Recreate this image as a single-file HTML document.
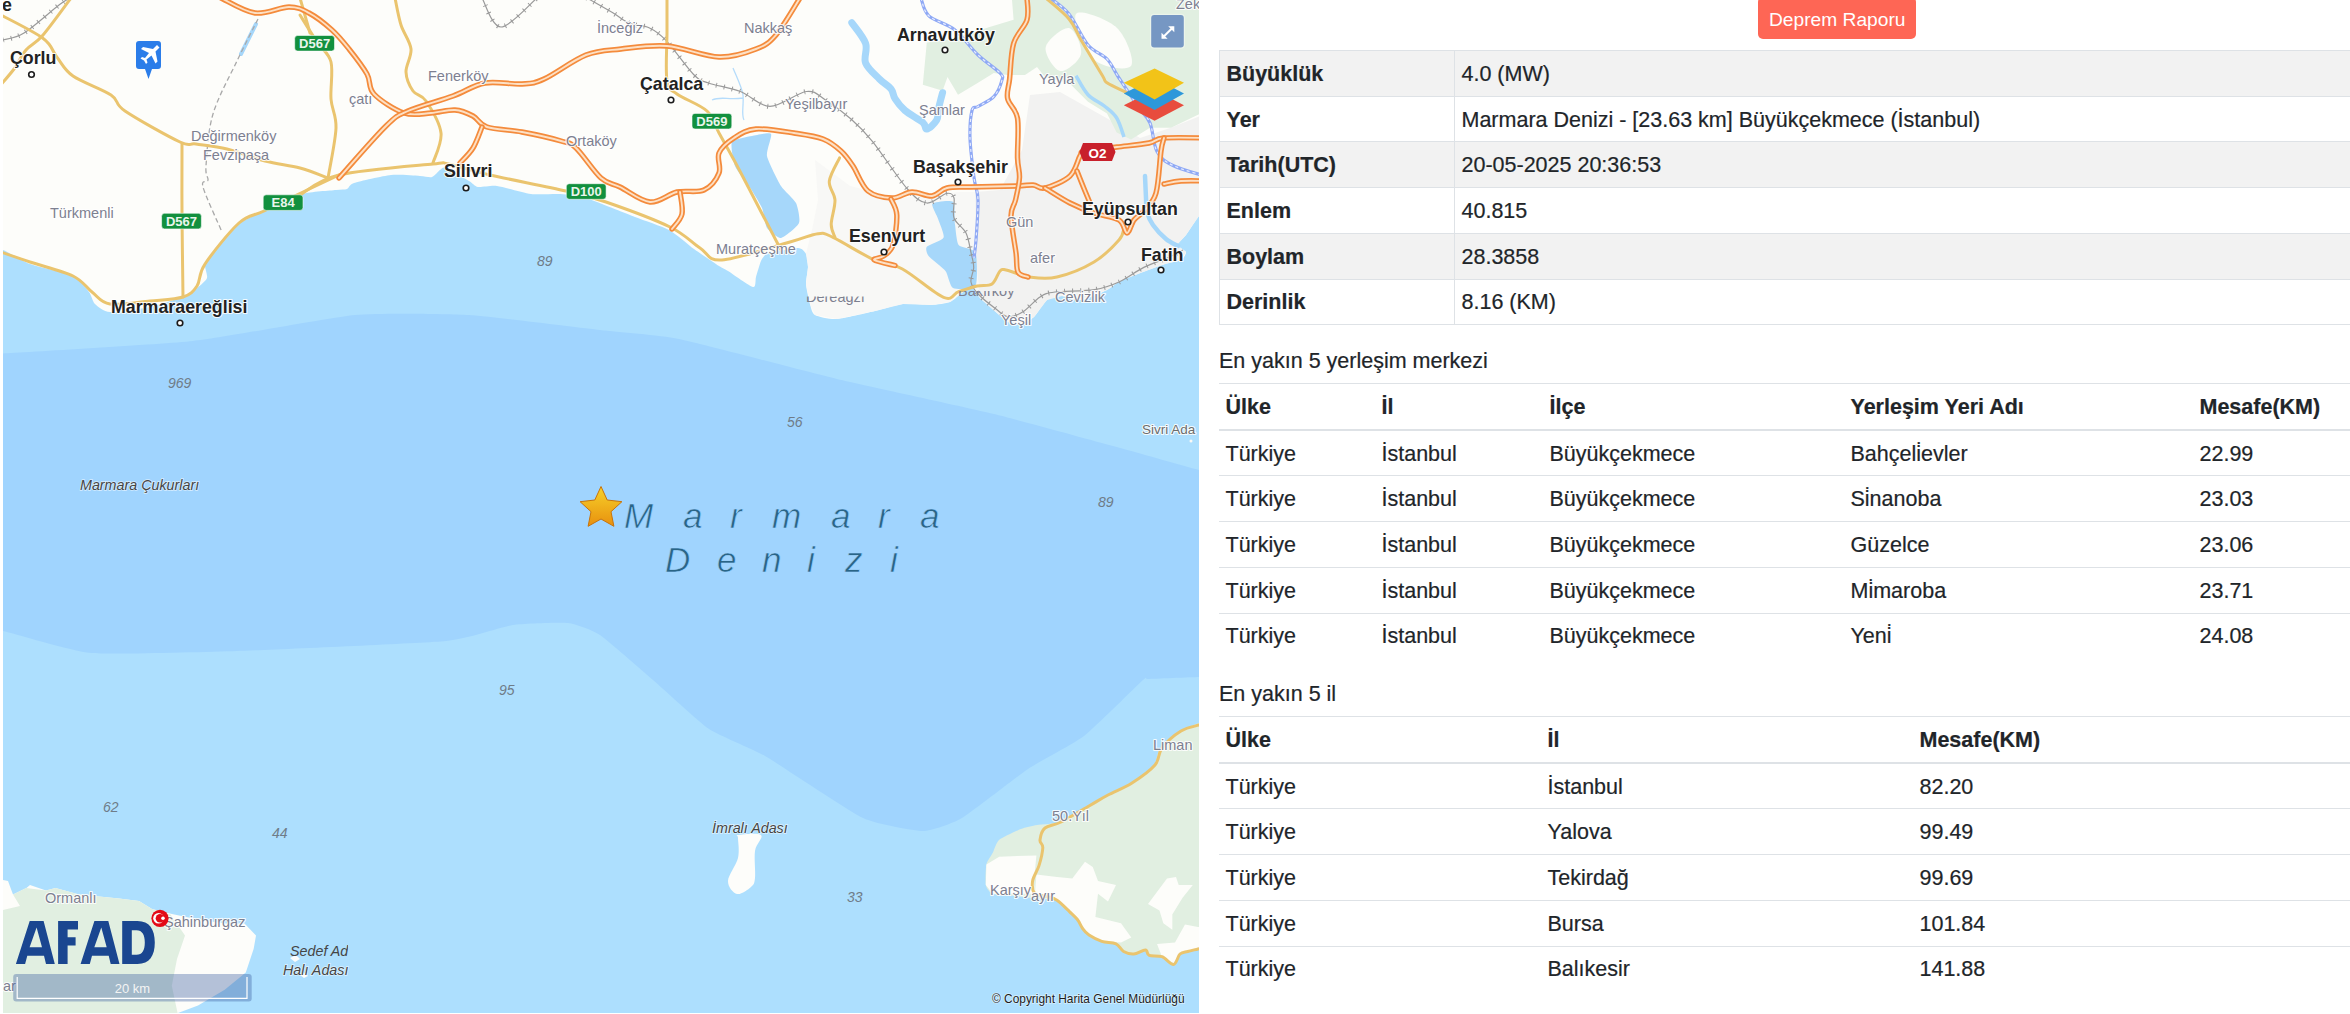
<!DOCTYPE html>
<html><head><meta charset="utf-8"><style>
html,body{margin:0;padding:0;background:#fff;width:2350px;height:1014px;overflow:hidden;position:relative;font-family:"Liberation Sans",sans-serif;color:#212529}
#map{position:absolute;left:0;top:0;width:1200px;height:1014px}
#map text{font-family:"Liberation Sans",sans-serif}
.btn{position:absolute;left:1758px;top:-3px;width:158px;height:41.7px;background:#fe6655;border-radius:5px;color:#fff;font-size:19.2px;line-height:1;box-sizing:border-box}
.btn span{position:absolute;left:11px;top:12.7px}
table{position:absolute;left:1219px;border-collapse:collapse;width:1200px;font-size:21.5px;table-layout:fixed;-webkit-text-stroke:0.2px #212529}
td,th{padding:7.8px 7.5px 6.2px 6.5px;line-height:30.75px;text-align:left;white-space:nowrap;vertical-align:top}
th{font-weight:bold}
.t1{top:50px;border:1px solid #dee2e6}
.t1 th,.t1 td{border:1px solid #dee2e6}
.t1 th{width:220px}
.t1 tr.odd{background:#f2f2f2}
.t2 tr,.t3 tr{border-top:1px solid #dee2e6}
.t2 tr.hd,.t3 tr.hd{border-bottom:2px solid #dee2e6}
.t2{top:383px}
.t3{top:716px}
.h{position:absolute;left:1219px;font-size:21.5px;white-space:nowrap;-webkit-text-stroke:0.2px #212529}
</style></head><body>
<svg id="map" width="1200" height="1014" viewBox="0 0 1200 1014">
<defs><clipPath id="mc"><rect x="3" y="0" width="1196" height="1013"/></clipPath></defs>
<g clip-path="url(#mc)">
<rect x="0" y="0" width="1210" height="1020" fill="#addffe"/>
<path d="M-20.0,354.0 C-18.1,331.0 -14.8,354.6 3.0,353.5 C20.8,352.4 163.7,344.2 193.0,341.0 C222.3,337.8 332.0,317.2 355.0,315.0 C378.0,312.8 448.6,313.8 469.0,315.0 C489.4,316.2 582.5,328.0 600.0,330.0 C617.5,332.0 659.2,334.9 679.0,339.0 C698.8,343.1 810.8,372.8 837.0,379.0 C863.2,385.2 971.0,408.4 994.0,414.0 C1017.0,419.6 1095.9,441.3 1113.0,446.0 C1130.1,450.7 1189.2,467.3 1199.0,470.0 C1208.8,472.7 1227.4,460.8 1230.0,478.0 C1232.6,495.2 1232.6,660.4 1230.0,677.0 C1227.4,693.6 1205.8,676.8 1199.0,677.0 C1192.2,677.2 1152.7,678.8 1148.0,679.0 C1143.3,679.2 1148.3,675.2 1143.0,680.0 C1137.7,684.8 1093.6,728.6 1084.0,736.0 C1074.4,743.4 1038.2,762.2 1028.0,769.0 C1017.8,775.8 970.8,812.8 962.0,818.0 C953.2,823.2 931.2,831.0 923.0,831.0 C914.8,831.0 876.2,824.2 863.0,818.0 C849.8,811.8 777.8,763.4 765.0,756.0 C752.2,748.6 718.3,735.3 709.0,729.0 C699.7,722.7 662.1,687.8 653.0,680.0 C643.9,672.2 607.1,639.8 600.0,635.0 C592.9,630.2 575.2,623.8 568.0,623.0 C560.8,622.2 523.2,623.5 513.0,625.0 C502.8,626.5 469.0,638.8 446.0,641.0 C423.0,643.2 266.6,650.0 237.0,651.0 C207.4,652.0 110.5,654.7 91.0,653.0 C71.5,651.3 12.2,632.9 3.0,631.0 C-6.2,629.1 -18.1,653.1 -20.0,630.0 C-21.9,606.9 -21.9,377.0 -20.0,354.0 Z" fill="#a0d4fe"/>
<path d="M-10.0,250.0 C-8.5,280.3 -1.7,248.4 3.0,250.0 C7.7,251.6 21.8,261.0 30.0,264.0 C38.2,267.0 66.1,272.7 73.0,276.0 C79.9,279.3 86.4,288.7 89.0,292.0 C91.6,295.3 92.5,301.7 95.0,304.0 C97.5,306.3 103.6,311.6 110.0,312.0 C116.4,312.4 141.2,308.9 150.0,307.0 C158.8,305.1 179.5,298.2 185.0,296.0 C190.5,293.8 194.4,290.1 197.0,288.0 C199.6,285.9 206.1,280.8 207.0,278.0 C207.9,275.2 204.3,266.9 205.0,264.0 C205.7,261.1 209.3,257.6 213.0,253.0 C216.7,248.4 231.1,229.9 237.0,225.0 C242.9,220.1 256.4,214.6 264.0,211.0 C271.6,207.4 293.6,196.4 302.0,194.0 C310.4,191.6 330.8,190.6 336.0,190.0 C341.2,189.4 344.9,189.8 347.0,189.0 C349.1,188.2 348.9,184.6 354.0,183.0 C359.1,181.4 383.3,175.8 391.0,175.0 C398.7,174.2 415.2,175.8 420.0,176.0 C424.8,176.2 429.7,177.7 432.0,177.0 C434.3,176.3 438.4,171.1 440.0,170.0 C441.6,168.9 442.6,166.7 446.0,168.0 C449.4,169.3 465.3,178.8 469.0,181.0 C472.7,183.2 474.7,186.4 478.0,187.0 C481.3,187.6 490.8,185.2 497.0,186.0 C503.2,186.8 523.9,193.1 531.0,194.0 C538.1,194.9 552.3,193.8 558.0,194.0 C563.7,194.2 575.5,195.1 580.0,196.0 C584.5,196.9 590.6,199.6 597.0,202.0 C603.4,204.4 626.6,213.7 635.0,217.0 C643.4,220.3 662.1,226.3 669.0,230.0 C675.9,233.7 688.2,244.8 694.0,249.0 C699.8,253.2 715.0,263.4 719.0,266.0 C723.0,268.6 724.0,268.6 728.0,271.0 C732.0,273.4 749.7,286.3 753.0,287.0 C756.3,287.7 755.1,280.0 756.0,277.0 C756.9,274.0 759.8,263.7 761.0,261.0 C762.2,258.3 765.0,254.9 766.0,254.0 C767.0,253.1 766.3,253.7 770.0,253.0 C773.7,252.3 793.8,247.9 798.0,248.0 C802.2,248.1 804.8,251.8 806.0,254.0 C807.2,256.2 808.0,263.5 808.0,267.0 C808.0,270.5 805.8,279.7 806.0,284.0 C806.2,288.3 809.0,300.4 810.0,304.0 C811.0,307.6 811.9,313.2 815.0,315.0 C818.1,316.8 830.0,319.5 837.0,319.0 C844.0,318.5 867.3,312.8 875.0,311.0 C882.7,309.2 896.5,304.7 903.0,304.0 C909.5,303.3 925.5,305.2 931.0,305.0 C936.5,304.8 946.3,303.5 950.0,302.0 C953.7,300.5 960.4,293.8 963.0,292.0 C965.6,290.2 970.0,286.3 972.0,287.0 C974.0,287.7 977.1,295.0 980.0,298.0 C982.9,301.0 993.7,310.2 997.0,313.0 C1000.3,315.8 1005.2,320.7 1008.0,322.0 C1010.8,323.3 1018.0,324.6 1021.0,324.0 C1024.0,323.4 1031.0,319.8 1034.0,317.0 C1037.0,314.2 1043.7,302.4 1047.0,300.0 C1050.3,297.6 1058.0,296.0 1062.0,296.0 C1066.0,296.0 1075.8,300.7 1081.0,300.0 C1086.2,299.3 1102.5,292.2 1107.0,290.0 C1111.5,287.8 1115.8,283.1 1120.0,281.0 C1124.2,278.9 1137.8,274.0 1143.0,272.0 C1148.2,270.0 1160.6,265.4 1165.0,264.0 C1169.4,262.6 1178.5,261.4 1181.0,260.0 C1183.5,258.6 1186.5,253.8 1186.0,252.0 C1185.5,250.2 1177.0,247.0 1177.0,245.0 C1177.0,243.0 1183.4,238.4 1186.0,235.0 C1188.6,231.6 1196.2,218.9 1199.0,216.0 C1201.8,213.1 1208.7,236.4 1210.0,210.0 C1211.3,183.6 1352.3,15.7 1210.0,-10.0 C1067.7,-35.7 132.3,-40.3 -10.0,-10.0 C-152.3,20.3 -11.5,219.7 -10.0,250.0 Z" fill="#fdfdfa"/>
<path d="M815.0,160.0 L850.0,186.0 L900.0,198.0 L960.0,192.0 L975.0,192.0 L976.0,260.0 L980.0,298.0 L972.0,287.0 L963.0,292.0 L950.0,302.0 L931.0,305.0 L903.0,304.0 L875.0,311.0 L837.0,319.0 L815.0,315.0 L810.0,304.0 L806.0,284.0 L808.0,267.0 L806.0,254.0 L812.0,230.0 L818.0,200.0 Z" fill="#f8f8f6"/>
<path d="M975.0,192.0 L1000.0,190.0 L1022.0,150.0 L1030.0,95.0 L1060.0,92.0 L1110.0,120.0 L1140.0,138.0 L1170.0,128.0 L1210.0,112.0 L1210.0,210.0 L1199.0,216.0 L1186.0,235.0 L1177.0,245.0 L1186.0,252.0 L1181.0,260.0 L1165.0,264.0 L1143.0,272.0 L1120.0,281.0 L1107.0,290.0 L1081.0,300.0 L1062.0,296.0 L1047.0,300.0 L1034.0,317.0 L1021.0,324.0 L1008.0,322.0 L997.0,313.0 L980.0,298.0 L976.0,260.0 Z" fill="#f2f2f1"/>
<path d="M926.8,42.4 L950.0,39.4 L988.0,27.6 L1013.6,19.7 L1011.6,-5.0 L1210.0,-5.0 L1210.0,108.9 L1171.0,127.8 L1150.0,127.8 L1131.0,139.6 L1116.7,132.5 L1107.0,113.6 L1088.0,101.8 L1069.0,82.8 L1045.7,78.0 L1037.0,67.0 L1025.0,75.0 L1007.6,75.0 L993.8,73.0 L978.0,82.8 L958.0,94.7 L947.5,76.9 L942.6,90.7 L922.8,84.8 Z" fill="#e1efe1"/>
<path d="M1045.7,47.0 C1047.2,39.8 1063.1,26.8 1069.0,28.0 C1074.9,29.2 1082.5,46.8 1081.0,54.0 C1079.5,61.2 1065.9,72.2 1060.0,71.0 C1054.1,69.8 1044.2,54.2 1045.7,47.0 Z" fill="#fdfdfa"/>
<path d="M1076.0,14.0 C1080.0,8.8 1107.8,19.3 1117.0,28.0 C1126.2,36.7 1135.0,60.8 1131.0,66.0 C1127.0,71.2 1102.2,67.7 1093.0,59.0 C1083.8,50.3 1072.0,19.2 1076.0,14.0 Z" fill="#fdfdfa"/>
<path d="M1210.0,723.0 C1208.9,700.4 1201.8,722.2 1199.0,723.0 C1196.2,723.8 1185.4,728.4 1181.5,731.0 C1177.6,733.6 1162.8,745.6 1160.0,749.0 C1157.2,752.4 1156.8,761.6 1154.0,765.0 C1151.2,768.4 1136.6,780.0 1132.0,783.0 C1127.4,786.0 1112.3,792.7 1108.0,795.0 C1103.7,797.3 1093.7,803.3 1089.0,806.0 C1084.3,808.7 1066.2,820.1 1061.0,822.0 C1055.8,823.9 1041.0,824.3 1037.0,825.0 C1033.0,825.7 1024.8,827.5 1021.0,829.0 C1017.2,830.5 1001.8,837.6 999.0,840.0 C996.2,842.4 994.1,850.4 992.8,852.8 C991.5,855.2 987.1,861.2 986.4,864.4 C985.7,867.6 985.2,882.0 985.8,884.9 C986.4,887.8 989.5,892.6 992.8,893.8 C996.1,894.9 1013.8,895.9 1018.5,896.4 C1023.2,896.9 1036.2,898.6 1040.0,899.0 C1043.8,899.4 1054.0,899.0 1057.0,900.3 C1060.0,901.6 1067.7,909.9 1069.7,911.8 C1071.7,913.7 1076.1,917.8 1077.4,919.5 C1078.7,921.2 1081.4,927.0 1082.6,928.5 C1083.8,930.0 1087.1,933.7 1089.0,935.0 C1090.9,936.3 1099.1,940.4 1101.8,941.3 C1104.5,942.2 1113.8,942.8 1116.0,943.8 C1118.2,944.8 1121.8,950.5 1123.6,951.5 C1125.4,952.5 1131.6,954.1 1133.8,954.0 C1136.0,953.9 1143.9,949.9 1145.4,950.0 C1146.9,950.1 1147.5,954.7 1149.2,955.4 C1150.9,956.1 1159.6,955.8 1162.0,956.7 C1164.4,957.6 1171.8,964.7 1173.6,964.4 C1175.4,964.1 1178.6,955.3 1180.0,954.0 C1181.4,952.7 1185.9,952.0 1187.7,951.5 C1189.5,951.0 1195.8,949.2 1198.0,949.0 C1200.2,948.8 1208.8,971.6 1210.0,949.0 C1211.2,926.4 1211.1,745.6 1210.0,723.0 Z" fill="#e1efe1"/>
<path d="M986.4,864.4 L999.2,856.7 L1036.4,855.4 L1033.8,882.3 L1035.0,893.8 L992.8,893.8 L985.8,884.9 Z" fill="#fdfdfa"/>
<path d="M1036.4,874.6 L1057.0,877.0 L1072.3,878.5 L1085.0,861.8 L1092.8,867.0 L1098.0,881.0 L1116.0,884.9 L1108.0,901.5 L1098.0,893.8 L1095.4,917.0 L1121.0,923.3 L1131.3,937.4 L1121.0,942.6 L1101.8,941.3 L1089.0,935.0 L1077.4,919.5 L1057.0,900.3 L1035.0,893.8 Z" fill="#fdfdfa"/>
<path d="M1148.0,904.0 L1167.0,878.5 L1176.0,877.0 L1178.7,885.0 L1192.8,885.0 L1182.6,897.7 L1172.3,914.4 L1172.3,929.7 L1163.3,923.3 L1159.5,910.5 Z" fill="#fdfdfa"/>
<path d="M1157.0,944.0 L1175.0,942.6 L1185.0,924.6 L1198.0,927.0 L1210.0,927.0 L1210.0,949.0 L1198.0,949.0 L1180.0,954.0 L1173.6,963.0 L1162.0,956.7 Z" fill="#fdfdfa"/>
<path d="M3.0,880.0 L8.0,881.0 L13.0,894.5 L26.4,888.0 L30.0,885.0 L46.0,890.6 L55.5,888.0 L79.0,894.5 L119.0,898.5 L139.0,901.0 L152.0,909.0 L172.0,914.0 L198.0,919.6 L224.7,923.6 L244.5,923.6 L256.0,935.5 L253.7,948.7 L245.8,972.5 L224.7,989.7 L198.0,1005.5 L178.0,1013.0 L-10.0,1013.0 L-10.0,880.0 Z" fill="#fdfdfa"/>
<path d="M3.0,910.0 L20.0,906.0 L13.0,894.5 L26.0,888.0 L46.0,890.6 L55.5,888.0 L79.0,894.5 L119.0,898.5 L139.0,901.0 L152.0,909.0 L170.5,914.4 L185.0,935.5 L177.0,959.0 L171.8,985.7 L178.0,1015.0 L-10.0,1015.0 L-10.0,910.0 Z" fill="#e1efe1"/>
<path d="M738.0,835.0 C741.8,834.5 758.2,832.3 761.0,835.0 C763.8,837.7 756.0,843.8 755.0,851.0 C754.0,858.2 755.7,872.0 755.0,878.0 C754.3,884.0 754.0,884.3 751.0,887.0 C748.0,889.7 740.8,895.0 737.0,894.0 C733.2,893.0 727.8,887.0 728.0,881.0 C728.2,875.0 736.3,865.2 738.0,858.0 C739.7,850.8 738.0,841.8 738.0,838.0 C738.0,834.2 734.2,835.5 738.0,835.0 Z" fill="#fdfdfa"/>
<path d="M290,958 l6,-3 l4,4 l-5,3z M300,975 l5,-2 l3,3 l-4,2z" fill="#fdfdfa"/>
<path d="M851.8,22.7 C854.1,26.1 863.3,36.7 865.6,43.4 C867.9,50.1 863.3,57.1 865.6,63.0 C867.9,68.9 875.2,74.7 879.4,79.0 C883.6,83.3 888.4,85.5 891.0,88.8 C893.6,92.1 892.7,95.0 895.0,98.6 C897.3,102.2 900.4,106.5 905.0,110.5 C909.6,114.5 919.2,119.2 922.8,122.3 C926.4,125.4 924.5,129.3 926.8,129.0 C929.1,128.7 934.6,123.7 936.6,120.3 C938.6,116.9 937.6,113.1 938.6,108.5 C939.6,103.9 941.9,95.3 942.6,92.7" fill="none" stroke="#a6d7fa" stroke-width="7" stroke-linecap="round" stroke-linejoin="round"/>
<path d="M1145.0,176.0 C1145.2,179.7 1145.7,192.0 1146.0,198.0 C1146.3,204.0 1145.8,207.5 1147.0,212.0 C1148.2,216.5 1149.8,220.5 1153.0,225.0 C1156.2,229.5 1161.8,235.5 1166.0,239.0 C1170.2,242.5 1176.0,244.8 1178.0,246.0" fill="none" stroke="#a6d7fa" stroke-width="4.5" stroke-linecap="round"/>
<path d="M732.0,142.0 C733.7,139.0 748.1,136.8 752.0,136.0 C755.9,135.2 769.5,132.0 771.0,134.0 C772.5,136.0 766.0,150.8 767.0,156.0 C768.0,161.2 778.1,181.3 781.0,186.0 C783.9,190.7 794.2,199.3 796.0,203.0 C797.8,206.7 800.5,219.5 799.0,223.0 C797.5,226.5 784.2,237.5 781.0,238.0 C777.8,238.5 768.9,231.0 767.0,228.0 C765.1,225.0 763.8,212.2 762.0,208.0 C760.2,203.8 751.7,190.2 749.0,186.0 C746.3,181.8 736.7,170.4 735.0,166.0 C733.3,161.6 730.3,145.0 732.0,142.0 Z" fill="#a6d7fa"/>
<path d="M932.4,203.7 C933.9,202.0 950.7,199.7 953.0,201.8 C955.3,203.9 954.4,220.0 955.0,224.3 C955.6,228.6 956.6,242.2 958.6,245.0 C960.6,247.8 973.8,248.3 975.5,252.4 C977.2,256.5 977.8,282.4 975.5,286.0 C973.2,289.6 956.0,289.5 953.0,288.0 C950.0,286.5 947.9,274.2 945.5,271.0 C943.1,267.8 930.5,258.4 928.6,256.0 C926.7,253.6 925.3,248.7 926.8,246.8 C928.3,244.9 942.5,240.2 943.6,237.4 C944.7,234.6 939.1,222.1 938.0,218.7 C936.9,215.3 930.9,205.4 932.4,203.7 Z" fill="#a6d7fa"/>
<path d="M1076.0,75.7 C1078.0,78.9 1083.2,89.6 1088.0,94.7 C1092.8,99.8 1100.2,102.6 1105.0,106.5 C1109.8,110.4 1113.5,112.9 1116.7,118.0 C1119.9,123.1 1122.8,133.8 1124.0,137.0" fill="none" stroke="#a6d7fa" stroke-width="3.5"/>
<path d="M733,68 C738,80 742,88 743,95 C744,105 741,115 744,120 M712,100 C720,96 728,100 743,98" fill="none" stroke="#b5dcfb" stroke-width="1.3"/>
<path d="M241,54 L256,24" stroke="#a6d7fa" stroke-width="4" stroke-linecap="round"/>
<path d="M258.0,19.0 C254.5,26.0 244.5,45.2 237.0,61.0 C229.5,76.8 218.2,96.5 213.0,114.0 C207.8,131.5 206.8,155.0 206.0,166.0 C205.2,177.0 208.5,176.5 208.0,180.0 C207.5,183.5 200.7,178.3 203.0,187.0 C205.3,195.7 218.8,224.5 222.0,232.0" fill="none" stroke="#a9a9a9" stroke-width="1.3" stroke-dasharray="5,3"/>
<path d="M482.0,-2.0 C485.2,2.8 491.8,27.0 501.0,27.0 C510.2,27.0 531.0,2.8 537.0,-2.0" fill="none" stroke="#9a9a9a" stroke-width="1.2"/><path d="M482.0,-2.0 C485.2,2.8 491.8,27.0 501.0,27.0 C510.2,27.0 531.0,2.8 537.0,-2.0" fill="none" stroke="#9a9a9a" stroke-width="5" stroke-dasharray="1,7"/>
<path d="M587.0,-2.0 C591.3,0.5 605.7,8.6 612.8,12.8 C619.9,17.0 623.8,20.9 629.8,23.4 C635.8,25.9 643.0,24.9 649.0,27.7 C655.0,30.5 658.6,32.6 666.0,40.4 C673.4,48.2 686.5,67.4 693.6,74.5 C700.7,81.6 700.7,80.2 708.5,83.0 C716.3,85.8 730.1,87.6 740.4,91.5 C750.6,95.4 759.0,106.4 770.0,106.4 C781.0,106.4 797.1,92.6 806.4,91.5 C815.6,90.4 818.1,95.4 825.5,100.0 C832.9,104.6 843.1,112.1 851.0,119.0 C858.9,125.9 863.3,130.0 872.6,141.6 C881.9,153.2 898.0,178.3 907.0,188.5 C916.0,198.7 920.2,202.2 926.8,203.0 C933.4,203.8 942.1,194.2 946.6,193.4 C951.1,192.6 952.8,193.9 954.0,198.0 C955.2,202.1 952.0,212.2 954.0,218.0 C956.0,223.8 963.2,227.2 966.0,233.0 C968.8,238.8 969.7,246.9 971.0,252.6 C972.3,258.3 973.7,262.5 973.7,267.4 C973.7,272.3 970.2,277.5 971.0,282.0 C971.8,286.5 974.4,290.0 978.6,294.5 C982.8,299.0 991.1,305.3 996.0,309.0 C1000.9,312.7 1003.5,316.2 1008.0,316.7 C1012.5,317.2 1017.7,315.1 1023.0,311.8 C1028.3,308.5 1034.7,300.3 1040.0,297.0 C1045.3,293.7 1045.9,293.2 1055.0,292.0 C1064.1,290.8 1083.8,291.3 1094.5,289.6 C1105.2,287.9 1110.8,285.7 1119.0,282.0 C1127.2,278.3 1135.6,271.5 1143.8,267.4 C1152.0,263.3 1161.9,260.4 1168.4,257.5 C1174.9,254.6 1180.6,251.2 1183.0,250.0" fill="none" stroke="#9a9a9a" stroke-width="1.2"/><path d="M587.0,-2.0 C591.3,0.5 605.7,8.6 612.8,12.8 C619.9,17.0 623.8,20.9 629.8,23.4 C635.8,25.9 643.0,24.9 649.0,27.7 C655.0,30.5 658.6,32.6 666.0,40.4 C673.4,48.2 686.5,67.4 693.6,74.5 C700.7,81.6 700.7,80.2 708.5,83.0 C716.3,85.8 730.1,87.6 740.4,91.5 C750.6,95.4 759.0,106.4 770.0,106.4 C781.0,106.4 797.1,92.6 806.4,91.5 C815.6,90.4 818.1,95.4 825.5,100.0 C832.9,104.6 843.1,112.1 851.0,119.0 C858.9,125.9 863.3,130.0 872.6,141.6 C881.9,153.2 898.0,178.3 907.0,188.5 C916.0,198.7 920.2,202.2 926.8,203.0 C933.4,203.8 942.1,194.2 946.6,193.4 C951.1,192.6 952.8,193.9 954.0,198.0 C955.2,202.1 952.0,212.2 954.0,218.0 C956.0,223.8 963.2,227.2 966.0,233.0 C968.8,238.8 969.7,246.9 971.0,252.6 C972.3,258.3 973.7,262.5 973.7,267.4 C973.7,272.3 970.2,277.5 971.0,282.0 C971.8,286.5 974.4,290.0 978.6,294.5 C982.8,299.0 991.1,305.3 996.0,309.0 C1000.9,312.7 1003.5,316.2 1008.0,316.7 C1012.5,317.2 1017.7,315.1 1023.0,311.8 C1028.3,308.5 1034.7,300.3 1040.0,297.0 C1045.3,293.7 1045.9,293.2 1055.0,292.0 C1064.1,290.8 1083.8,291.3 1094.5,289.6 C1105.2,287.9 1110.8,285.7 1119.0,282.0 C1127.2,278.3 1135.6,271.5 1143.8,267.4 C1152.0,263.3 1161.9,260.4 1168.4,257.5 C1174.9,254.6 1180.6,251.2 1183.0,250.0" fill="none" stroke="#9a9a9a" stroke-width="5" stroke-dasharray="1,7"/>
<path d="M3.0,40.0 C6.5,38.8 14.7,38.8 24.0,33.0 C33.3,27.2 51.3,10.8 59.0,5.0 C66.7,-0.8 68.2,-0.8 70.0,-2.0" fill="none" stroke="#9a9a9a" stroke-width="1.2"/><path d="M3.0,40.0 C6.5,38.8 14.7,38.8 24.0,33.0 C33.3,27.2 51.3,10.8 59.0,5.0 C66.7,-0.8 68.2,-0.8 70.0,-2.0" fill="none" stroke="#9a9a9a" stroke-width="5" stroke-dasharray="1,7"/>
<path d="M920.9,-2.0 C922.2,1.0 923.2,10.5 928.8,15.8 C934.4,21.1 946.2,23.1 954.4,29.6 C962.6,36.1 970.4,47.8 978.0,55.0 C985.6,62.2 996.0,68.7 1000.0,73.0 C1004.0,77.3 1002.7,77.0 1001.7,80.9 C1000.7,84.8 997.8,92.3 993.8,96.6 C989.8,100.9 981.6,104.2 978.0,106.5 C974.4,108.8 973.3,105.2 972.0,110.5 C970.7,115.8 969.7,126.8 970.0,138.0 C970.3,149.2 972.7,167.2 974.0,177.5 C975.3,187.8 977.7,189.6 978.0,200.0 C978.3,210.4 976.7,230.3 976.0,240.0 C975.3,249.7 974.3,255.0 974.0,258.0" fill="none" stroke="#8fa9f5" stroke-width="3.2"/><path d="M920.9,-2.0 C922.2,1.0 923.2,10.5 928.8,15.8 C934.4,21.1 946.2,23.1 954.4,29.6 C962.6,36.1 970.4,47.8 978.0,55.0 C985.6,62.2 996.0,68.7 1000.0,73.0 C1004.0,77.3 1002.7,77.0 1001.7,80.9 C1000.7,84.8 997.8,92.3 993.8,96.6 C989.8,100.9 981.6,104.2 978.0,106.5 C974.4,108.8 973.3,105.2 972.0,110.5 C970.7,115.8 969.7,126.8 970.0,138.0 C970.3,149.2 972.7,167.2 974.0,177.5 C975.3,187.8 977.7,189.6 978.0,200.0 C978.3,210.4 976.7,230.3 976.0,240.0 C975.3,249.7 974.3,255.0 974.0,258.0" fill="none" stroke="#e6ecff" stroke-width="1.2" stroke-dasharray="3,3"/>
<path d="M1050.0,-2.0 C1053.2,0.7 1062.7,6.2 1069.0,14.0 C1075.3,21.8 1081.7,37.5 1088.0,45.0 C1094.3,52.5 1101.8,53.5 1107.0,59.0 C1112.2,64.5 1113.8,70.1 1119.0,78.0 C1124.2,85.9 1132.8,99.0 1138.0,106.5 C1143.2,114.0 1146.8,115.5 1150.0,123.0 C1153.2,130.5 1153.1,144.4 1157.0,151.5 C1160.9,158.6 1164.7,161.4 1173.5,165.7 C1182.3,170.0 1203.9,175.5 1210.0,177.5" fill="none" stroke="#8fa9f5" stroke-width="3.2"/><path d="M1050.0,-2.0 C1053.2,0.7 1062.7,6.2 1069.0,14.0 C1075.3,21.8 1081.7,37.5 1088.0,45.0 C1094.3,52.5 1101.8,53.5 1107.0,59.0 C1112.2,64.5 1113.8,70.1 1119.0,78.0 C1124.2,85.9 1132.8,99.0 1138.0,106.5 C1143.2,114.0 1146.8,115.5 1150.0,123.0 C1153.2,130.5 1153.1,144.4 1157.0,151.5 C1160.9,158.6 1164.7,161.4 1173.5,165.7 C1182.3,170.0 1203.9,175.5 1210.0,177.5" fill="none" stroke="#e6ecff" stroke-width="1.2" stroke-dasharray="3,3"/>
<path d="M300.0,195.0 C306.5,191.7 316.8,180.2 339.0,175.0 C361.2,169.8 414.8,165.8 433.0,164.0 C451.2,162.2 438.5,162.2 448.0,164.0 C457.5,165.8 470.3,170.5 490.0,175.0 C509.7,179.5 546.7,186.5 566.0,191.0 C585.3,195.5 588.7,196.0 606.0,202.0 C623.3,208.0 654.3,219.3 670.0,227.0 C685.7,234.7 691.3,242.5 700.0,248.0 C708.7,253.5 707.0,261.0 722.0,260.0 C737.0,259.0 774.0,246.4 790.0,242.0 C806.0,237.6 810.8,234.5 818.0,233.7 C825.2,232.9 823.6,233.0 833.0,237.4 C842.4,241.8 862.7,254.7 874.3,260.0 C885.9,265.3 890.8,262.8 902.4,269.0 C914.0,275.2 934.2,293.6 943.6,297.4 C953.0,301.2 953.0,293.6 958.6,291.7 C964.2,289.8 971.4,287.3 977.0,286.0 C982.6,284.7 988.2,286.5 992.0,284.0 C995.8,281.5 997.7,273.3 1000.0,271.0 C1002.3,268.7 1001.0,269.0 1006.0,270.0 C1011.0,271.0 1021.5,275.8 1030.0,277.0 C1038.5,278.2 1046.3,279.5 1057.0,277.0 C1067.7,274.5 1083.7,268.2 1094.0,262.0 C1104.3,255.8 1114.0,245.7 1119.0,240.0 C1124.0,234.3 1123.2,230.0 1124.0,228.0" fill="none" stroke="#eac46e" stroke-width="3" stroke-linecap="round" stroke-linejoin="round"/>
<path d="M395.0,-2.0 C396.0,2.5 398.3,16.5 401.0,25.0 C403.7,33.5 410.2,41.2 411.0,49.0 C411.8,56.8 405.7,65.0 406.0,72.0 C406.3,79.0 409.7,86.2 413.0,91.0 C416.3,95.8 421.3,94.0 426.0,101.0 C430.7,108.0 439.8,122.7 441.0,133.0 C442.2,143.3 434.3,158.0 433.0,163.0" fill="none" stroke="#eac46e" stroke-width="3" stroke-linecap="round" stroke-linejoin="round"/>
<path d="M300.0,15.0 C302.8,19.5 311.8,34.2 317.0,42.0 C322.2,49.8 328.7,52.5 331.0,62.0 C333.3,71.5 330.2,88.0 331.0,99.0 C331.8,110.0 336.5,114.8 336.0,128.0 C335.5,141.2 329.3,169.7 328.0,178.0" fill="none" stroke="#eac46e" stroke-width="3" stroke-linecap="round" stroke-linejoin="round"/>
<path d="M667.0,-2.0 C667.0,3.7 667.0,18.2 667.0,32.0 C667.0,45.8 665.3,70.7 667.0,81.0 C668.7,91.3 670.3,89.0 677.0,94.0 C683.7,99.0 700.0,104.5 707.0,111.0 C714.0,117.5 714.5,124.8 719.0,133.0 C723.5,141.2 727.8,148.5 734.0,160.0 C740.2,171.5 748.2,187.0 756.0,202.0 C763.8,217.0 776.8,242.0 781.0,250.0" fill="none" stroke="#eac46e" stroke-width="3" stroke-linecap="round" stroke-linejoin="round"/>
<path d="M839.6,157.8 C837.9,161.7 830.1,174.2 829.3,181.2 C828.5,188.2 834.7,192.8 835.0,200.0 C835.3,207.2 831.2,218.1 831.2,224.3 C831.2,230.5 834.4,235.2 835.0,237.4" fill="none" stroke="#eac46e" stroke-width="3" stroke-linecap="round" stroke-linejoin="round"/>
<path d="M-5.0,12.0 C2.9,16.3 32.3,30.5 42.6,38.0 C52.9,45.5 51.7,50.7 56.8,57.0 C61.9,63.3 64.0,69.7 73.0,76.0 C82.0,82.3 102.3,89.2 111.0,95.0 C119.7,100.8 113.5,103.2 125.0,111.0 C136.5,118.8 168.2,136.5 180.0,142.0 C191.8,147.5 188.2,142.8 196.0,144.0 C203.8,145.2 215.5,146.2 227.0,149.0 C238.5,151.8 252.8,157.8 265.0,161.0 C277.2,164.2 289.5,165.2 300.0,168.0 C310.5,170.8 323.3,176.3 328.0,178.0" fill="none" stroke="#eac46e" stroke-width="3" stroke-linecap="round" stroke-linejoin="round"/>
<path d="M182.0,144.0 C182.0,155.5 181.8,187.5 182.0,213.0 C182.2,238.5 182.8,283.0 183.0,297.0" fill="none" stroke="#eac46e" stroke-width="3" stroke-linecap="round" stroke-linejoin="round"/>
<path d="M71.0,-2.0 C66.3,4.2 50.1,26.8 42.6,35.5 C35.1,44.2 30.8,44.4 26.0,50.0 C21.2,55.6 18.7,62.7 14.0,69.0 C9.3,75.3 0.7,84.8 -2.0,88.0" fill="none" stroke="#eac46e" stroke-width="3" stroke-linecap="round" stroke-linejoin="round"/>
<path d="M-5.0,250.0 C0.8,252.0 17.0,257.7 30.0,262.0 C43.0,266.3 62.7,271.0 73.0,276.0 C83.3,281.0 85.8,287.3 92.0,292.0 C98.2,296.7 100.3,302.5 110.0,304.0 C119.7,305.5 137.8,302.2 150.0,301.0 C162.2,299.8 175.2,299.5 183.0,297.0 C190.8,294.5 193.3,291.5 197.0,286.0 C200.7,280.5 198.0,274.5 205.0,264.0 C212.0,253.5 229.2,231.8 239.0,223.0 C248.8,214.2 253.3,216.2 264.0,211.0 C274.7,205.8 290.5,198.0 303.0,192.0 C315.5,186.0 333.0,177.8 339.0,175.0" fill="none" stroke="#eac46e" stroke-width="3" stroke-linecap="round" stroke-linejoin="round"/>
<path d="M300.0,-2.0 L310.0,33.0" fill="none" stroke="#eac46e" stroke-width="3" stroke-linecap="round" stroke-linejoin="round"/>
<path d="M1045.7,-2.0 C1049.6,1.5 1063.1,12.0 1069.0,19.0 C1074.9,26.0 1075.4,30.5 1081.0,40.0 C1086.6,49.5 1098.2,68.6 1102.5,75.7 C1106.8,82.8 1103.1,80.0 1107.0,82.8 C1110.9,85.6 1122.8,90.7 1126.0,92.3" fill="none" stroke="#eac46e" stroke-width="3" stroke-linecap="round" stroke-linejoin="round"/>
<path d="M1199.0,725.0 C1196.0,726.0 1187.2,727.2 1181.0,731.0 C1174.8,734.8 1166.3,742.3 1162.0,748.0 C1157.7,753.7 1160.0,759.2 1155.0,765.0 C1150.0,770.8 1139.8,778.0 1132.0,783.0 C1124.2,788.0 1115.2,791.2 1108.0,795.0 C1100.8,798.8 1096.8,801.5 1089.0,806.0 C1081.2,810.5 1068.3,818.3 1061.0,822.0 C1053.7,825.7 1048.5,825.0 1045.0,828.0 C1041.5,831.0 1040.4,836.7 1040.0,840.0 C1039.6,843.3 1043.0,843.4 1042.8,847.7 C1042.6,852.0 1040.7,860.1 1039.0,865.6 C1037.3,871.1 1033.3,876.3 1032.6,881.0 C1031.9,885.7 1032.7,891.2 1035.0,893.8 C1037.3,896.4 1043.0,895.3 1046.7,896.4 C1050.4,897.5 1053.2,897.7 1057.0,900.3 C1060.8,902.9 1066.3,908.6 1069.7,911.8 C1073.1,915.0 1075.2,916.7 1077.4,919.5 C1079.6,922.3 1080.7,925.9 1082.6,928.5 C1084.5,931.1 1085.8,932.9 1089.0,935.0 C1092.2,937.1 1097.3,939.8 1101.8,941.3 C1106.3,942.8 1112.4,942.1 1116.0,943.8 C1119.6,945.5 1120.6,949.8 1123.6,951.5 C1126.6,953.2 1130.2,954.2 1133.8,954.0 C1137.4,953.8 1142.8,949.8 1145.4,950.0 C1148.0,950.2 1146.4,954.3 1149.2,955.4 C1152.0,956.5 1157.9,955.2 1162.0,956.7 C1166.1,958.2 1170.6,964.9 1173.6,964.4 C1176.6,963.9 1177.7,956.1 1180.0,954.0 C1182.3,951.9 1184.7,952.3 1187.7,951.5 C1190.7,950.7 1194.3,949.9 1198.0,949.0 C1201.7,948.1 1208.0,946.5 1210.0,946.0" fill="none" stroke="#eac46e" stroke-width="3" stroke-linecap="round" stroke-linejoin="round"/>
<path d="M221.0,-2.0 C226.7,0.5 243.7,11.5 255.0,13.0 C266.3,14.5 280.0,7.0 289.0,7.0 C298.0,7.0 301.8,9.2 309.0,13.0 C316.2,16.8 325.3,24.0 332.0,30.0 C338.7,36.0 343.2,41.7 349.0,49.0 C354.8,56.3 362.8,66.5 367.0,74.0 C371.2,81.5 367.8,87.5 374.0,94.0 C380.2,100.5 394.5,109.8 404.0,113.0 C413.5,116.2 422.5,113.5 431.0,113.0 C439.5,112.5 448.0,109.5 455.0,110.0 C462.0,110.5 467.7,113.2 473.0,116.0 C478.3,118.8 478.8,124.3 487.0,127.0 C495.2,129.7 509.7,129.7 522.0,132.0 C534.3,134.3 552.0,138.3 561.0,141.0 C570.0,143.7 569.3,141.8 576.0,148.0 C582.7,154.2 593.7,171.5 601.0,178.0 C608.3,184.5 611.8,183.0 620.0,187.0 C628.2,191.0 640.5,201.2 650.0,202.0 C659.5,202.8 668.0,194.0 677.0,192.0 C686.0,190.0 697.0,193.2 704.0,190.0 C711.0,186.8 716.5,179.2 719.0,173.0 C721.5,166.8 716.5,158.8 719.0,153.0 C721.5,147.2 727.8,142.0 734.0,138.0 C740.2,134.0 746.0,129.8 756.0,129.0 C766.0,128.2 782.8,131.3 794.0,133.0 C805.2,134.7 815.2,136.0 823.0,139.0 C830.8,142.0 836.0,146.5 841.0,151.0 C846.0,155.5 848.5,159.3 853.0,166.0 C857.5,172.7 861.5,185.7 868.0,191.0 C874.5,196.3 884.7,197.8 892.0,198.0 C899.3,198.2 905.3,192.3 912.0,192.0 C918.7,191.7 926.2,196.7 932.0,196.0 C937.8,195.3 940.5,189.5 947.0,188.0 C953.5,186.5 959.5,187.3 971.0,187.0 C982.5,186.7 1005.7,186.3 1016.0,186.0 C1026.3,185.7 1028.2,184.7 1033.0,185.0 C1037.8,185.3 1038.8,189.5 1045.0,188.0 C1051.2,186.5 1064.2,181.3 1070.0,176.0 C1075.8,170.7 1077.5,160.2 1080.0,156.0 C1082.5,151.8 1078.8,152.5 1085.0,151.0 C1091.2,149.5 1106.3,148.3 1117.0,147.0 C1127.7,145.7 1141.2,144.5 1149.0,143.0 C1156.8,141.5 1153.8,138.8 1164.0,138.0 C1174.2,137.2 1202.3,138.0 1210.0,138.0" fill="none" stroke="#f48b3c" stroke-width="5.4" stroke-linecap="round" stroke-linejoin="round"/><path d="M221.0,-2.0 C226.7,0.5 243.7,11.5 255.0,13.0 C266.3,14.5 280.0,7.0 289.0,7.0 C298.0,7.0 301.8,9.2 309.0,13.0 C316.2,16.8 325.3,24.0 332.0,30.0 C338.7,36.0 343.2,41.7 349.0,49.0 C354.8,56.3 362.8,66.5 367.0,74.0 C371.2,81.5 367.8,87.5 374.0,94.0 C380.2,100.5 394.5,109.8 404.0,113.0 C413.5,116.2 422.5,113.5 431.0,113.0 C439.5,112.5 448.0,109.5 455.0,110.0 C462.0,110.5 467.7,113.2 473.0,116.0 C478.3,118.8 478.8,124.3 487.0,127.0 C495.2,129.7 509.7,129.7 522.0,132.0 C534.3,134.3 552.0,138.3 561.0,141.0 C570.0,143.7 569.3,141.8 576.0,148.0 C582.7,154.2 593.7,171.5 601.0,178.0 C608.3,184.5 611.8,183.0 620.0,187.0 C628.2,191.0 640.5,201.2 650.0,202.0 C659.5,202.8 668.0,194.0 677.0,192.0 C686.0,190.0 697.0,193.2 704.0,190.0 C711.0,186.8 716.5,179.2 719.0,173.0 C721.5,166.8 716.5,158.8 719.0,153.0 C721.5,147.2 727.8,142.0 734.0,138.0 C740.2,134.0 746.0,129.8 756.0,129.0 C766.0,128.2 782.8,131.3 794.0,133.0 C805.2,134.7 815.2,136.0 823.0,139.0 C830.8,142.0 836.0,146.5 841.0,151.0 C846.0,155.5 848.5,159.3 853.0,166.0 C857.5,172.7 861.5,185.7 868.0,191.0 C874.5,196.3 884.7,197.8 892.0,198.0 C899.3,198.2 905.3,192.3 912.0,192.0 C918.7,191.7 926.2,196.7 932.0,196.0 C937.8,195.3 940.5,189.5 947.0,188.0 C953.5,186.5 959.5,187.3 971.0,187.0 C982.5,186.7 1005.7,186.3 1016.0,186.0 C1026.3,185.7 1028.2,184.7 1033.0,185.0 C1037.8,185.3 1038.8,189.5 1045.0,188.0 C1051.2,186.5 1064.2,181.3 1070.0,176.0 C1075.8,170.7 1077.5,160.2 1080.0,156.0 C1082.5,151.8 1078.8,152.5 1085.0,151.0 C1091.2,149.5 1106.3,148.3 1117.0,147.0 C1127.7,145.7 1141.2,144.5 1149.0,143.0 C1156.8,141.5 1153.8,138.8 1164.0,138.0 C1174.2,137.2 1202.3,138.0 1210.0,138.0" fill="none" stroke="#fde0c4" stroke-width="1.9" stroke-linecap="round"/>
<path d="M339.0,178.0 C346.8,169.3 374.5,137.2 386.0,126.0 C397.5,114.8 396.8,116.0 408.0,111.0 C419.2,106.0 440.2,100.7 453.0,96.0 C465.8,91.3 473.5,85.0 485.0,83.0 C496.5,81.0 512.2,84.7 522.0,84.0 C531.8,83.3 533.3,83.8 544.0,79.0 C554.7,74.2 573.2,60.0 586.0,55.0 C598.8,50.0 607.5,50.5 621.0,49.0 C634.5,47.5 650.7,44.7 667.0,46.0 C683.3,47.3 704.2,56.5 719.0,57.0 C733.8,57.5 746.5,52.7 756.0,49.0 C765.5,45.3 768.7,43.5 776.0,35.0 C783.3,26.5 796.0,4.2 800.0,-2.0" fill="none" stroke="#f48b3c" stroke-width="5.4" stroke-linecap="round" stroke-linejoin="round"/><path d="M339.0,178.0 C346.8,169.3 374.5,137.2 386.0,126.0 C397.5,114.8 396.8,116.0 408.0,111.0 C419.2,106.0 440.2,100.7 453.0,96.0 C465.8,91.3 473.5,85.0 485.0,83.0 C496.5,81.0 512.2,84.7 522.0,84.0 C531.8,83.3 533.3,83.8 544.0,79.0 C554.7,74.2 573.2,60.0 586.0,55.0 C598.8,50.0 607.5,50.5 621.0,49.0 C634.5,47.5 650.7,44.7 667.0,46.0 C683.3,47.3 704.2,56.5 719.0,57.0 C733.8,57.5 746.5,52.7 756.0,49.0 C765.5,45.3 768.7,43.5 776.0,35.0 C783.3,26.5 796.0,4.2 800.0,-2.0" fill="none" stroke="#fde0c4" stroke-width="1.9" stroke-linecap="round"/>
<path d="M482.0,127.0 C480.5,130.5 476.7,142.0 473.0,148.0 C469.3,154.0 462.2,160.5 460.0,163.0" fill="none" stroke="#f48b3c" stroke-width="5.4" stroke-linecap="round" stroke-linejoin="round"/><path d="M482.0,127.0 C480.5,130.5 476.7,142.0 473.0,148.0 C469.3,154.0 462.2,160.5 460.0,163.0" fill="none" stroke="#fde0c4" stroke-width="1.9" stroke-linecap="round"/>
<path d="M680.0,192.0 C680.3,195.7 683.3,207.8 682.0,214.0 C680.7,220.2 673.7,226.5 672.0,229.0" fill="none" stroke="#f48b3c" stroke-width="5.4" stroke-linecap="round" stroke-linejoin="round"/><path d="M680.0,192.0 C680.3,195.7 683.3,207.8 682.0,214.0 C680.7,220.2 673.7,226.5 672.0,229.0" fill="none" stroke="#fde0c4" stroke-width="1.9" stroke-linecap="round"/>
<path d="M1027.0,-2.0 C1027.0,1.6 1029.2,12.1 1027.0,19.7 C1024.8,27.3 1016.5,33.5 1013.6,43.4 C1010.7,53.3 1010.6,69.8 1009.6,79.0 C1008.6,88.2 1006.3,92.0 1007.6,98.6 C1008.9,105.1 1015.9,108.4 1017.5,118.3 C1019.1,128.2 1017.2,147.9 1017.5,157.8 C1017.8,167.7 1019.8,170.5 1019.5,177.5 C1019.2,184.5 1016.9,193.6 1015.5,200.0 C1014.1,206.4 1010.9,207.2 1011.0,216.0 C1011.1,224.8 1014.8,243.7 1016.0,253.0 C1017.2,262.3 1016.0,268.0 1018.0,272.0 C1020.0,276.0 1026.3,276.2 1028.0,277.0" fill="none" stroke="#f48b3c" stroke-width="5.4" stroke-linecap="round" stroke-linejoin="round"/><path d="M1027.0,-2.0 C1027.0,1.6 1029.2,12.1 1027.0,19.7 C1024.8,27.3 1016.5,33.5 1013.6,43.4 C1010.7,53.3 1010.6,69.8 1009.6,79.0 C1008.6,88.2 1006.3,92.0 1007.6,98.6 C1008.9,105.1 1015.9,108.4 1017.5,118.3 C1019.1,128.2 1017.2,147.9 1017.5,157.8 C1017.8,167.7 1019.8,170.5 1019.5,177.5 C1019.2,184.5 1016.9,193.6 1015.5,200.0 C1014.1,206.4 1010.9,207.2 1011.0,216.0 C1011.1,224.8 1014.8,243.7 1016.0,253.0 C1017.2,262.3 1016.0,268.0 1018.0,272.0 C1020.0,276.0 1026.3,276.2 1028.0,277.0" fill="none" stroke="#fde0c4" stroke-width="1.9" stroke-linecap="round"/>
<path d="M891.0,199.0 C892.0,201.7 896.5,207.3 896.8,215.0 C897.1,222.7 895.2,238.2 893.0,245.0 C890.8,251.8 886.8,253.5 883.7,256.0 C880.6,258.5 872.4,258.4 874.3,260.0 C876.2,261.6 891.5,264.6 895.0,265.5" fill="none" stroke="#f48b3c" stroke-width="5.4" stroke-linecap="round" stroke-linejoin="round"/><path d="M891.0,199.0 C892.0,201.7 896.5,207.3 896.8,215.0 C897.1,222.7 895.2,238.2 893.0,245.0 C890.8,251.8 886.8,253.5 883.7,256.0 C880.6,258.5 872.4,258.4 874.3,260.0 C876.2,261.6 891.5,264.6 895.0,265.5" fill="none" stroke="#fde0c4" stroke-width="1.9" stroke-linecap="round"/>
<path d="M1045.0,188.0 C1049.2,190.5 1061.8,198.8 1070.0,203.0 C1078.2,207.2 1085.8,210.2 1094.0,213.0 C1102.2,215.8 1113.5,216.7 1119.0,220.0 C1124.5,223.3 1124.5,233.0 1127.0,233.0 C1129.5,233.0 1131.2,223.7 1134.0,220.0 C1136.8,216.3 1140.3,215.5 1144.0,211.0 C1147.7,206.5 1153.2,203.0 1156.0,193.0 C1158.8,183.0 1159.7,160.2 1161.0,151.0 C1162.3,141.8 1163.5,140.2 1164.0,138.0" fill="none" stroke="#f48b3c" stroke-width="5.4" stroke-linecap="round" stroke-linejoin="round"/><path d="M1045.0,188.0 C1049.2,190.5 1061.8,198.8 1070.0,203.0 C1078.2,207.2 1085.8,210.2 1094.0,213.0 C1102.2,215.8 1113.5,216.7 1119.0,220.0 C1124.5,223.3 1124.5,233.0 1127.0,233.0 C1129.5,233.0 1131.2,223.7 1134.0,220.0 C1136.8,216.3 1140.3,215.5 1144.0,211.0 C1147.7,206.5 1153.2,203.0 1156.0,193.0 C1158.8,183.0 1159.7,160.2 1161.0,151.0 C1162.3,141.8 1163.5,140.2 1164.0,138.0" fill="none" stroke="#fde0c4" stroke-width="1.9" stroke-linecap="round"/>
<path d="M1077.0,171.0 C1078.3,174.3 1082.8,185.7 1085.0,191.0 C1087.2,196.3 1089.2,201.0 1090.0,203.0" fill="none" stroke="#f48b3c" stroke-width="5.4" stroke-linecap="round" stroke-linejoin="round"/><path d="M1077.0,171.0 C1078.3,174.3 1082.8,185.7 1085.0,191.0 C1087.2,196.3 1089.2,201.0 1090.0,203.0" fill="none" stroke="#fde0c4" stroke-width="1.9" stroke-linecap="round"/>
<path d="M1164.0,184.0 C1166.8,183.5 1173.3,181.5 1181.0,181.0 C1188.7,180.5 1205.2,181.0 1210.0,181.0" fill="none" stroke="#f48b3c" stroke-width="5.4" stroke-linecap="round" stroke-linejoin="round"/><path d="M1164.0,184.0 C1166.8,183.5 1173.3,181.5 1181.0,181.0 C1188.7,180.5 1205.2,181.0 1210.0,181.0" fill="none" stroke="#fde0c4" stroke-width="1.9" stroke-linecap="round"/>
<rect x="294.7" y="35.5" width="39.8" height="15.6" rx="3" fill="#12903e" stroke="#fff" stroke-opacity="0.7" stroke-width="0.8"/><text x="314.6" y="48.1" font-size="13" font-weight="bold" fill="#e9f5ec" text-anchor="middle">D567</text>
<rect x="161.6" y="213.3" width="39.8" height="15.6" rx="3" fill="#12903e" stroke="#fff" stroke-opacity="0.7" stroke-width="0.8"/><text x="181.5" y="225.9" font-size="13" font-weight="bold" fill="#e9f5ec" text-anchor="middle">D567</text>
<rect x="263.2" y="194.8" width="39.8" height="15.6" rx="3" fill="#12903e" stroke="#fff" stroke-opacity="0.7" stroke-width="0.8"/><text x="283.1" y="207.4" font-size="13" font-weight="bold" fill="#e9f5ec" text-anchor="middle">E84</text>
<rect x="566.3" y="183.7" width="39.8" height="15.6" rx="3" fill="#12903e" stroke="#fff" stroke-opacity="0.7" stroke-width="0.8"/><text x="586.2" y="196.29999999999998" font-size="13" font-weight="bold" fill="#e9f5ec" text-anchor="middle">D100</text>
<rect x="692" y="113.4" width="39.8" height="15.6" rx="3" fill="#12903e" stroke="#fff" stroke-opacity="0.7" stroke-width="0.8"/><text x="711.9" y="126.0" font-size="13" font-weight="bold" fill="#e9f5ec" text-anchor="middle">D569</text>
<path d="M1083,143 L1112,143 L1115.5,152 L1112,161 L1083,161 L1079.5,152 Z" fill="#c8202b"/><text x="1097.5" y="157.5" font-size="13.5" font-weight="bold" fill="#fff" text-anchor="middle">O2</text>
<circle cx="31.5" cy="74.5" r="2.8" fill="#fff" stroke="#1c1c1c" stroke-width="1.6"/>
<circle cx="180" cy="323" r="2.8" fill="#fff" stroke="#1c1c1c" stroke-width="1.6"/>
<circle cx="466" cy="188" r="2.8" fill="#fff" stroke="#1c1c1c" stroke-width="1.6"/>
<circle cx="671" cy="100" r="2.8" fill="#fff" stroke="#1c1c1c" stroke-width="1.6"/>
<circle cx="945" cy="50" r="2.8" fill="#fff" stroke="#1c1c1c" stroke-width="1.6"/>
<circle cx="958" cy="182" r="2.8" fill="#fff" stroke="#1c1c1c" stroke-width="1.6"/>
<circle cx="884" cy="252" r="2.8" fill="#fff" stroke="#1c1c1c" stroke-width="1.6"/>
<circle cx="1128" cy="222" r="2.8" fill="#fff" stroke="#1c1c1c" stroke-width="1.6"/>
<circle cx="1161" cy="270" r="2.8" fill="#fff" stroke="#1c1c1c" stroke-width="1.6"/>
<text x="10" y="64" font-size="17.8" fill="#222222" font-weight="bold" font-style="normal" text-anchor="start" stroke="#ffffff" stroke-opacity="0.85" stroke-width="2.2" paint-order="stroke" stroke-linejoin="round">Çorlu</text>
<text x="111" y="313" font-size="17.8" fill="#222222" font-weight="bold" font-style="normal" text-anchor="start" stroke="#ffffff" stroke-opacity="0.85" stroke-width="2.2" paint-order="stroke" stroke-linejoin="round">Marmaraereğlisi</text>
<text x="444" y="177" font-size="17.8" fill="#222222" font-weight="bold" font-style="normal" text-anchor="start" stroke="#ffffff" stroke-opacity="0.85" stroke-width="2.2" paint-order="stroke" stroke-linejoin="round">Silivri</text>
<text x="640" y="90" font-size="17.8" fill="#222222" font-weight="bold" font-style="normal" text-anchor="start" stroke="#ffffff" stroke-opacity="0.85" stroke-width="2.2" paint-order="stroke" stroke-linejoin="round">Çatalca</text>
<text x="897" y="41" font-size="17.8" fill="#222222" font-weight="bold" font-style="normal" text-anchor="start" stroke="#ffffff" stroke-opacity="0.85" stroke-width="2.2" paint-order="stroke" stroke-linejoin="round">Arnavutköy</text>
<text x="913" y="173" font-size="17.8" fill="#222222" font-weight="bold" font-style="normal" text-anchor="start" stroke="#ffffff" stroke-opacity="0.85" stroke-width="2.2" paint-order="stroke" stroke-linejoin="round">Başakşehir</text>
<text x="849" y="242" font-size="17.8" fill="#222222" font-weight="bold" font-style="normal" text-anchor="start" stroke="#ffffff" stroke-opacity="0.85" stroke-width="2.2" paint-order="stroke" stroke-linejoin="round">Esenyurt</text>
<text x="1082" y="215" font-size="17.8" fill="#222222" font-weight="bold" font-style="normal" text-anchor="start" stroke="#ffffff" stroke-opacity="0.85" stroke-width="2.2" paint-order="stroke" stroke-linejoin="round">Eyüpsultan</text>
<text x="1141" y="261" font-size="17.8" fill="#222222" font-weight="bold" font-style="normal" text-anchor="start" stroke="#ffffff" stroke-opacity="0.85" stroke-width="2.2" paint-order="stroke" stroke-linejoin="round">Fatih</text>
<text x="2" y="11" font-size="17.8" fill="#222222" font-weight="bold" font-style="normal" text-anchor="start" stroke="#ffffff" stroke-opacity="0.85" stroke-width="2.2" paint-order="stroke" stroke-linejoin="round">e</text>
<text x="191" y="141" font-size="14.5" fill="#7d8090" font-weight="normal" font-style="normal" text-anchor="start" stroke="#ffffff" stroke-opacity="0.85" stroke-width="2.2" paint-order="stroke" stroke-linejoin="round">Değirmenköy</text>
<text x="203" y="160" font-size="14.5" fill="#7d8090" font-weight="normal" font-style="normal" text-anchor="start" stroke="#ffffff" stroke-opacity="0.85" stroke-width="2.2" paint-order="stroke" stroke-linejoin="round">Fevzipaşa</text>
<text x="50" y="218" font-size="14.5" fill="#7d8090" font-weight="normal" font-style="normal" text-anchor="start" stroke="#ffffff" stroke-opacity="0.85" stroke-width="2.2" paint-order="stroke" stroke-linejoin="round">Türkmenli</text>
<text x="428" y="81" font-size="14.5" fill="#7d8090" font-weight="normal" font-style="normal" text-anchor="start" stroke="#ffffff" stroke-opacity="0.85" stroke-width="2.2" paint-order="stroke" stroke-linejoin="round">Fenerköy</text>
<text x="349" y="104" font-size="14.5" fill="#7d8090" font-weight="normal" font-style="normal" text-anchor="start" stroke="#ffffff" stroke-opacity="0.85" stroke-width="2.2" paint-order="stroke" stroke-linejoin="round">çatı</text>
<text x="566" y="146" font-size="14.5" fill="#7d8090" font-weight="normal" font-style="normal" text-anchor="start" stroke="#ffffff" stroke-opacity="0.85" stroke-width="2.2" paint-order="stroke" stroke-linejoin="round">Ortaköy</text>
<text x="597" y="33" font-size="14.5" fill="#7d8090" font-weight="normal" font-style="normal" text-anchor="start" stroke="#ffffff" stroke-opacity="0.85" stroke-width="2.2" paint-order="stroke" stroke-linejoin="round">İnceğiz</text>
<text x="744" y="33" font-size="14.5" fill="#7d8090" font-weight="normal" font-style="normal" text-anchor="start" stroke="#ffffff" stroke-opacity="0.85" stroke-width="2.2" paint-order="stroke" stroke-linejoin="round">Nakkaş</text>
<text x="785" y="109" font-size="14.5" fill="#7d8090" font-weight="normal" font-style="normal" text-anchor="start" stroke="#ffffff" stroke-opacity="0.85" stroke-width="2.2" paint-order="stroke" stroke-linejoin="round">Yeşilbayır</text>
<text x="919" y="115" font-size="14.5" fill="#7d8090" font-weight="normal" font-style="normal" text-anchor="start" stroke="#ffffff" stroke-opacity="0.85" stroke-width="2.2" paint-order="stroke" stroke-linejoin="round">Şamlar</text>
<text x="1039" y="84" font-size="14.5" fill="#7d8090" font-weight="normal" font-style="normal" text-anchor="start" stroke="#ffffff" stroke-opacity="0.85" stroke-width="2.2" paint-order="stroke" stroke-linejoin="round">Yayla</text>
<text x="1006" y="227" font-size="14.5" fill="#7d8090" font-weight="normal" font-style="normal" text-anchor="start" stroke="#ffffff" stroke-opacity="0.85" stroke-width="2.2" paint-order="stroke" stroke-linejoin="round">Gün</text>
<text x="1030" y="263" font-size="14.5" fill="#7d8090" font-weight="normal" font-style="normal" text-anchor="start" stroke="#ffffff" stroke-opacity="0.85" stroke-width="2.2" paint-order="stroke" stroke-linejoin="round">afer</text>
<text x="716" y="254" font-size="14.5" fill="#7d8090" font-weight="normal" font-style="normal" text-anchor="start" stroke="#ffffff" stroke-opacity="0.85" stroke-width="2.2" paint-order="stroke" stroke-linejoin="round">Muratçeşme</text>
<text x="1055" y="302" font-size="14.5" fill="#7d8090" font-weight="normal" font-style="normal" text-anchor="start" stroke="#ffffff" stroke-opacity="0.85" stroke-width="2.2" paint-order="stroke" stroke-linejoin="round">Cevizlik</text>
<text x="1001" y="325" font-size="14.5" fill="#7d8090" font-weight="normal" font-style="normal" text-anchor="start" stroke="#ffffff" stroke-opacity="0.85" stroke-width="2.2" paint-order="stroke" stroke-linejoin="round">Yeşil</text>
<text x="1153" y="750" font-size="14.5" fill="#7d8090" font-weight="normal" font-style="normal" text-anchor="start" stroke="#ffffff" stroke-opacity="0.85" stroke-width="2.2" paint-order="stroke" stroke-linejoin="round">Liman</text>
<text x="1052" y="821" font-size="14.5" fill="#7d8090" font-weight="normal" font-style="normal" text-anchor="start" stroke="#ffffff" stroke-opacity="0.85" stroke-width="2.2" paint-order="stroke" stroke-linejoin="round">50.Yıl</text>
<text x="990" y="895" font-size="14.5" fill="#7d8090" font-weight="normal" font-style="normal" text-anchor="start" stroke="#ffffff" stroke-opacity="0.85" stroke-width="2.2" paint-order="stroke" stroke-linejoin="round">Karşıy</text>
<text x="1031" y="901" font-size="14.5" fill="#7d8090" font-weight="normal" font-style="normal" text-anchor="start" stroke="#ffffff" stroke-opacity="0.85" stroke-width="2.2" paint-order="stroke" stroke-linejoin="round">ayır</text>
<text x="45" y="903" font-size="14.5" fill="#7d8090" font-weight="normal" font-style="normal" text-anchor="start" stroke="#ffffff" stroke-opacity="0.85" stroke-width="2.2" paint-order="stroke" stroke-linejoin="round">Ormanlı</text>
<text x="164" y="927" font-size="14.5" fill="#7d8090" font-weight="normal" font-style="normal" text-anchor="start" stroke="#ffffff" stroke-opacity="0.85" stroke-width="2.2" paint-order="stroke" stroke-linejoin="round">Şahinburgaz</text>
<text x="1176" y="9" font-size="14.5" fill="#7d8090" font-weight="normal" font-style="normal" text-anchor="start" stroke="#ffffff" stroke-opacity="0.85" stroke-width="2.2" paint-order="stroke" stroke-linejoin="round">Zek</text>
<text x="3" y="991" font-size="14.5" fill="#7d8090" font-weight="normal" font-style="normal" text-anchor="start" stroke="#ffffff" stroke-opacity="0.85" stroke-width="2.2" paint-order="stroke" stroke-linejoin="round">ar</text>
<text x="168" y="388" font-size="14" fill="#6f7c88" font-weight="normal" font-style="italic" text-anchor="start" >969</text>
<text x="787" y="427" font-size="14" fill="#6f7c88" font-weight="normal" font-style="italic" text-anchor="start" >56</text>
<text x="1098" y="507" font-size="14" fill="#6f7c88" font-weight="normal" font-style="italic" text-anchor="start" >89</text>
<text x="537" y="266" font-size="14" fill="#6f7c88" font-weight="normal" font-style="italic" text-anchor="start" >89</text>
<text x="499" y="695" font-size="14" fill="#6f7c88" font-weight="normal" font-style="italic" text-anchor="start" >95</text>
<text x="103" y="812" font-size="14" fill="#6f7c88" font-weight="normal" font-style="italic" text-anchor="start" >62</text>
<text x="272" y="838" font-size="14" fill="#6f7c88" font-weight="normal" font-style="italic" text-anchor="start" >44</text>
<text x="847" y="902" font-size="14" fill="#6f7c88" font-weight="normal" font-style="italic" text-anchor="start" >33</text>
<defs><clipPath id="cS"><rect x="280" y="940" width="68" height="20"/></clipPath></defs>
<g clip-path="url(#cS)"><text x="290" y="956" font-size="14.3" fill="#454545" font-weight="normal" font-style="italic" text-anchor="start" >Sedef Adası</text></g>
<text x="80" y="490" font-size="14.3" fill="#454545" font-weight="normal" font-style="italic" text-anchor="start" stroke="#fff" stroke-opacity="0.6" stroke-width="1.5" paint-order="stroke">Marmara Çukurları</text>
<text x="712" y="833" font-size="14.3" fill="#454545" font-weight="normal" font-style="italic" text-anchor="start" stroke="#fff" stroke-opacity="0.6" stroke-width="1.5" paint-order="stroke">İmralı Adası</text>
<text x="283" y="975" font-size="14.3" fill="#454545" font-weight="normal" font-style="italic" text-anchor="start" stroke="#fff" stroke-opacity="0.6" stroke-width="1.5" paint-order="stroke">Halı Adası</text>
<defs><clipPath id="cD"><rect x="790" y="296.5" width="100" height="20"/></clipPath><clipPath id="cB"><rect x="950" y="291" width="80" height="20"/></clipPath></defs>
<g clip-path="url(#cD)"><text x="806" y="302" font-size="14.5" fill="#7d8090" font-weight="normal" font-style="normal" text-anchor="start" >Dereağzı</text></g>
<g clip-path="url(#cB)"><text x="958" y="296" font-size="14.5" fill="#7d8090" font-weight="normal" font-style="normal" text-anchor="start" >Bakırköy</text></g>
<text x="1142" y="434" font-size="13.5" fill="#6c6c6c" font-weight="normal" font-style="normal" text-anchor="start" stroke="#ffffff" stroke-opacity="0.85" stroke-width="2.2" paint-order="stroke" stroke-linejoin="round">Sivri Ada</text>
<circle cx="1191" cy="441" r="1.5" fill="#fbfaf7"/>
<text x="624" y="528" font-size="35" font-style="italic" fill="#2a6586" stroke="#a0d4fe" stroke-width="0.6">M</text>
<text x="683" y="528" font-size="35" font-style="italic" fill="#2a6586" stroke="#a0d4fe" stroke-width="0.6">a</text>
<text x="730" y="528" font-size="35" font-style="italic" fill="#2a6586" stroke="#a0d4fe" stroke-width="0.6">r</text>
<text x="772" y="528" font-size="35" font-style="italic" fill="#2a6586" stroke="#a0d4fe" stroke-width="0.6">m</text>
<text x="831" y="528" font-size="35" font-style="italic" fill="#2a6586" stroke="#a0d4fe" stroke-width="0.6">a</text>
<text x="878" y="528" font-size="35" font-style="italic" fill="#2a6586" stroke="#a0d4fe" stroke-width="0.6">r</text>
<text x="920" y="528" font-size="35" font-style="italic" fill="#2a6586" stroke="#a0d4fe" stroke-width="0.6">a</text>
<text x="665" y="572" font-size="35" font-style="italic" fill="#2a6586" stroke="#a0d4fe" stroke-width="0.6">D</text>
<text x="717" y="572" font-size="35" font-style="italic" fill="#2a6586" stroke="#a0d4fe" stroke-width="0.6">e</text>
<text x="762" y="572" font-size="35" font-style="italic" fill="#2a6586" stroke="#a0d4fe" stroke-width="0.6">n</text>
<text x="807" y="572" font-size="35" font-style="italic" fill="#2a6586" stroke="#a0d4fe" stroke-width="0.6">i</text>
<text x="845" y="572" font-size="35" font-style="italic" fill="#2a6586" stroke="#a0d4fe" stroke-width="0.6">z</text>
<text x="890" y="572" font-size="35" font-style="italic" fill="#2a6586" stroke="#a0d4fe" stroke-width="0.6">i</text>
<defs><linearGradient id="sg" x1="0" y1="0" x2="0" y2="1"><stop offset="0" stop-color="#f7d22a"/><stop offset="1" stop-color="#e8900e"/></linearGradient></defs>
<path d="M601.0,486.5 L607.2,500.0 L621.9,501.7 L611.0,511.7 L613.9,526.3 L601.0,519.0 L588.1,526.3 L591.0,511.7 L580.1,501.7 L594.8,500.0 Z" fill="url(#sg)" stroke="#c8730a" stroke-width="1" stroke-linejoin="round"/>
<path d="M139,41 h19 a3,3 0 0 1 3,3 v22 a3,3 0 0 1 -3,3 h-6 l-3.5,10 l-3.5,-10 h-6 a3,3 0 0 1 -3,-3 v-22 a3,3 0 0 1 3,-3z" fill="#2b7de9"/>
<path d="M157,45 l-4,4 l-10,-2 l-2,2 l8,4 l-4,5 l-3,-1 l-1.5,1.5 l3.5,2 l2,3.5 l1.5,-1.5 l-1,-3 l5,-4 l4,8 l2,-2 l-2,-10 l4,-4 z" fill="#fff"/>
<rect x="1150" y="13.7" width="35" height="35" rx="4" fill="#ffffff" fill-opacity="0.35"/>
<rect x="1151.2" y="14.9" width="32.6" height="32.6" rx="3" fill="#7697c3"/>
<path d="M1163,37.3 L1172.6,27.8" stroke="#fff" stroke-width="2" fill="none" stroke-linecap="round"/><path d="M1174.3,26.2 L1174.3,32.3 L1168.2,26.2 Z M1161.5,38.8 L1161.5,32.7 L1167.6,38.8 Z" fill="#fff"/>
<path d="M1123.8,105.3 L1154.6,90 L1184,105.3 L1154.6,120.7 Z" fill="#e84c3d"/>
<path d="M1123.8,93.5 L1154.6,78 L1184,93.5 L1154.6,110 Z" fill="#2d98da"/>
<path d="M1123.8,82.8 L1154.6,68.6 L1184,82.8 L1154.6,99.4 Z" fill="#f2c318"/>
<path fill-rule="evenodd" fill="#1a4690" d="M15.9,963.9 L29.7,921 L43.6,921 L54.8,963.9 L46,963.9 L44,955.8 L27.3,955.8 L25.1,963.9 Z M29.6,947.2 L36.6,927.5 L42,947.2 Z M58.1,921 H78 V929.6 H67.6 V937.2 H75.6 V945.6 H67.6 V963.9 H58.1 Z M80.6,963.9 L94.4,921 L108.3,921 L119.5,963.9 L110.7,963.9 L108.7,955.8 L92,955.8 L89.8,963.9 Z M94.3,947.2 L101.3,927.5 L106.7,947.2 Z M122.2,921 H137.5 C149.5,921 154.8,929.5 154.8,942.4 C154.8,955.5 149.5,963.9 137.5,963.9 H122.2 Z M131.8,930.2 V954.7 H136.5 C142.3,954.7 144.8,950 144.8,942.4 C144.8,935 142.3,930.2 136.5,930.2 Z"/>
<circle cx="160" cy="918.3" r="8.6" fill="#e30a17"/><circle cx="158.5" cy="918.3" r="5.3" fill="#fff"/><circle cx="160" cy="918.3" r="4.3" fill="#e30a17"/><circle cx="163" cy="918.3" r="1.8" fill="#fff"/>
<rect x="13.2" y="974" width="238.5" height="27.6" rx="3" fill="rgb(60,95,160)" fill-opacity="0.38"/>
<path d="M17.2,977 V998.3 H247 V977" fill="none" stroke="#fff" stroke-width="1.2"/>
<text x="132.5" y="993" font-size="13" fill="#f4f4f4" text-anchor="middle">20 km</text>
<text x="992" y="1003" font-size="11.9" fill="#1c1c1c" stroke="#fff" stroke-opacity="0.5" stroke-width="1.5" paint-order="stroke">© Copyright Harita Genel Müdürlüğü</text>
</g>
</svg>
<div class="btn"><span>Deprem Raporu</span></div>
<table class="t1"><tr class="odd"><th>Büyüklük</th><td>4.0 (MW)</td></tr><tr class=""><th>Yer</th><td>Marmara Denizi - [23.63 km] Büyükçekmece (İstanbul)</td></tr><tr class="odd"><th>Tarih(UTC)</th><td>20-05-2025 20:36:53</td></tr><tr class=""><th>Enlem</th><td>40.815</td></tr><tr class="odd"><th>Boylam</th><td>28.3858</td></tr><tr class=""><th>Derinlik</th><td>8.16 (KM)</td></tr></table>
<div class="h" style="top:349px">En yakın 5 yerleşim merkezi</div>
<table class="t2"><colgroup><col style="width:156px"><col style="width:168px"><col style="width:301px"><col style="width:349px"><col></colgroup><tr class="hd"><th>Ülke</th><th>İl</th><th>İlçe</th><th>Yerleşim Yeri Adı</th><th>Mesafe(KM)</th></tr><tr><td>Türkiye</td><td>İstanbul</td><td>Büyükçekmece</td><td>Bahçeli̇evler</td><td>22.99</td></tr><tr><td>Türkiye</td><td>İstanbul</td><td>Büyükçekmece</td><td>Si̇nanoba</td><td>23.03</td></tr><tr><td>Türkiye</td><td>İstanbul</td><td>Büyükçekmece</td><td>Güzelce</td><td>23.06</td></tr><tr><td>Türkiye</td><td>İstanbul</td><td>Büyükçekmece</td><td>Mi̇maroba</td><td>23.71</td></tr><tr><td>Türkiye</td><td>İstanbul</td><td>Büyükçekmece</td><td>Yeni̇</td><td>24.08</td></tr></table>
<div class="h" style="top:681.5px">En yakın 5 il</div>
<table class="t3"><colgroup><col style="width:322px"><col style="width:372px"><col></colgroup><tr class="hd"><th>Ülke</th><th>İl</th><th>Mesafe(KM)</th></tr><tr><td>Türkiye</td><td>İstanbul</td><td>82.20</td></tr><tr><td>Türkiye</td><td>Yalova</td><td>99.49</td></tr><tr><td>Türkiye</td><td>Tekirdağ</td><td>99.69</td></tr><tr><td>Türkiye</td><td>Bursa</td><td>101.84</td></tr><tr><td>Türkiye</td><td>Balıkesir</td><td>141.88</td></tr></table>
</body></html>
